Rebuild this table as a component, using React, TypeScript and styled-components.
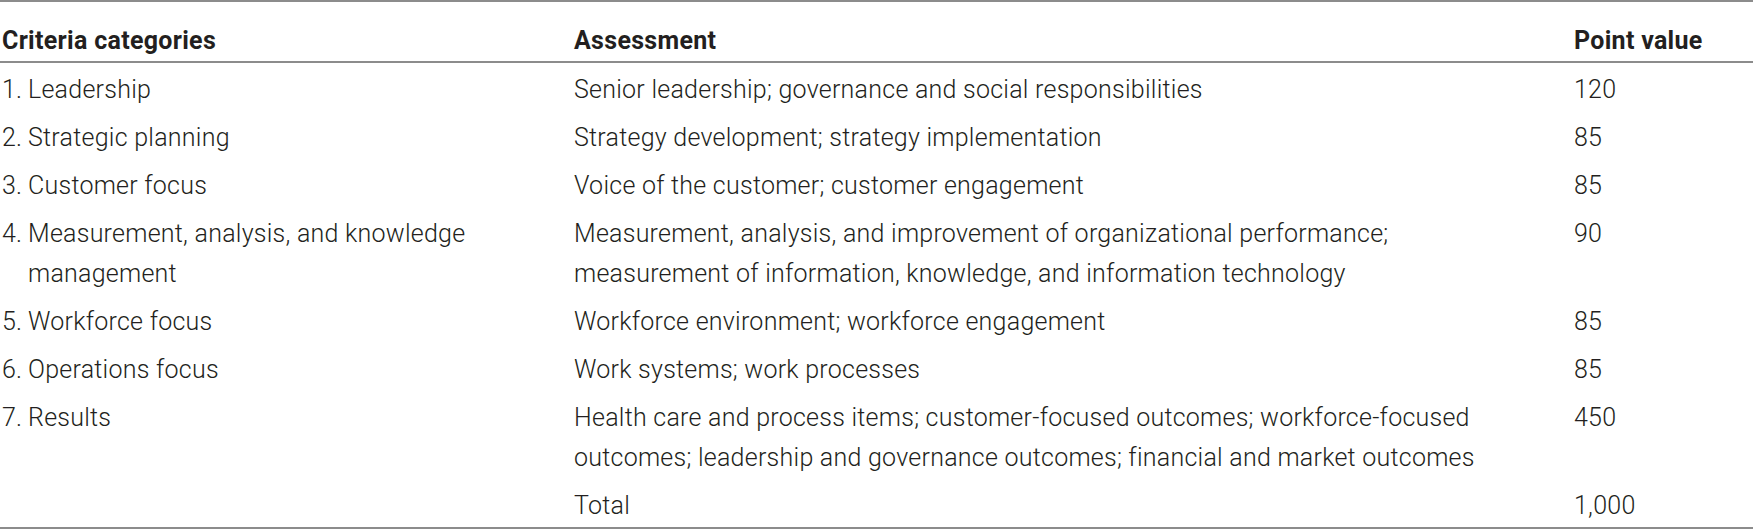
import styled, { createGlobalStyle } from "styled-components";

const GlobalStyle = createGlobalStyle`
  html, body {
    margin: 0;
    padding: 0;
    background: #ffffff;
  }
  body {
    font-family: Roboto, "Liberation Sans", sans-serif;
    color: #231f20;
  }
`;

const Table = styled.div`
  width: 1753px;
  border-top: 2px solid #8c8c8c;
  border-bottom: 2px solid #8c8c8c;
`;

const Row = styled.div<{ $head?: boolean }>`
  display: grid;
  grid-template-columns: 574px 1000px 1fr;
  padding: ${(p) => (p.$head ? "19px 0 0" : "7px 0 1px")};
  border-bottom: ${(p) => (p.$head ? "2px solid #8c8c8c" : "none")};
`;

const Cell = styled.div<{ $head?: boolean }>`
  font-size: 25px;
  line-height: 40px;
  font-weight: ${(p) => (p.$head ? 700 : 300)};
  letter-spacing: ${(p) => (p.$head ? "0.3px" : "0.25px")};
  white-space: nowrap;
  &:first-child {
    padding-left: 2px;
  }
`;

const Item = styled.div`
  display: flex;
`;

const Num = styled.span`
  flex: 0 0 26px;
`;

type Criterion = {
  num?: string;
  name: string[];
  assessment: string[];
  points: string;
};

const rows: Criterion[] = [
  {
    num: "1.",
    name: ["Leadership"],
    assessment: ["Senior leadership; governance and social responsibilities"],
    points: "120",
  },
  {
    num: "2.",
    name: ["Strategic planning"],
    assessment: ["Strategy development; strategy implementation"],
    points: "85",
  },
  {
    num: "3.",
    name: ["Customer focus"],
    assessment: ["Voice of the customer; customer engagement"],
    points: "85",
  },
  {
    num: "4.",
    name: ["Measurement, analysis, and knowledge", "management"],
    assessment: [
      "Measurement, analysis, and improvement of organizational performance;",
      "measurement of information, knowledge, and information technology",
    ],
    points: "90",
  },
  {
    num: "5.",
    name: ["Workforce focus"],
    assessment: ["Workforce environment; workforce engagement"],
    points: "85",
  },
  {
    num: "6.",
    name: ["Operations focus"],
    assessment: ["Work systems; work processes"],
    points: "85",
  },
  {
    num: "7.",
    name: ["Results"],
    assessment: [
      "Health care and process items; customer-focused outcomes; workforce-focused",
      "outcomes; leadership and governance outcomes; financial and market outcomes",
    ],
    points: "450",
  },
  {
    name: [],
    assessment: ["Total"],
    points: "1,000",
  },
];

const Lines = ({ lines }: { lines: string[] }) => (
  <div>
    {lines.map((l, i) => (
      <div key={i}>{l}</div>
    ))}
  </div>
);

export default function App() {
  return (
    <>
      <GlobalStyle />
      <Table>
        <Row $head>
          <Cell $head>Criteria categories</Cell>
          <Cell $head>Assessment</Cell>
          <Cell $head>Point value</Cell>
        </Row>
        {rows.map((r, i) => (
          <Row key={i}>
            <Cell>
              {r.num && (
                <Item>
                  <Num>{r.num}</Num>
                  <Lines lines={r.name} />
                </Item>
              )}
            </Cell>
            <Cell>
              <Lines lines={r.assessment} />
            </Cell>
            <Cell>{r.points}</Cell>
          </Row>
        ))}
      </Table>
    </>
  );
}
